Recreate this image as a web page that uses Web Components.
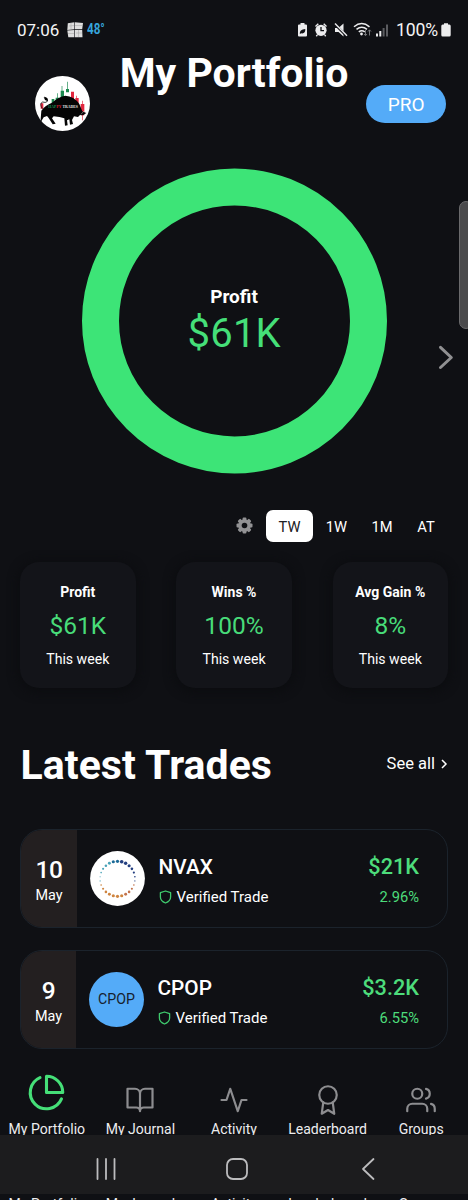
<!DOCTYPE html>
<html lang="en">
<head>
<meta charset="utf-8">
<title>My Portfolio</title>
<style>
html,body{margin:0;background:#0f1014}
body{width:468px;height:1200px;overflow:hidden;font-family:Roboto,sans-serif;color:#fff}
</style>
</head>
<body>
<portfolio-app></portfolio-app>
<script>
const define = (name, html) => customElements.define(name, class extends HTMLElement {
  constructor() {
    super();
    const root = this.attachShadow({ mode: 'open' });
    const t = document.createElement('template');
    t.innerHTML = typeof html === 'function' ? html(this) : html;
    root.append(t.content.cloneNode(true));
  }
});

define('status-bar', `
<style>
:host{display:flex;align-items:center;height:50px;padding:10px 17px 0;box-sizing:border-box;font-size:17px;line-height:20px;color:#f4f4f5}
.win{margin-left:8px;margin-right:4px}
.temp{font-weight:700;font-size:14.500px;color:#36a5dc;transform:scaleX(.8);transform-origin:0 50%;flex:1}
.pct{margin-left:7px;margin-right:3px;font-size:17.600px;letter-spacing:-.15px}
svg{display:block;flex:none}
</style>
<span>07:06</span>
<svg class="win" width="16" height="16" viewBox="0 0 16 16" fill="#dedede"><path d="M.8 1.200 7.400.3V7.300L.3 8zM8 .3 16 1 15.200 7.300H8zM.3 8.500 7.400 8v7.200L1.300 15.200zM8 8l7.200-.1.3 7.300-7.500.1z"/><path d="M2 4l5-.5M8 3.500h7M1 11.500h6M9 11h6M4 1v6M11.500 8v7" stroke="#a2a2a2" stroke-width=".5"/></svg>
<span class="temp">48°</span>
<svg width="92" height="16" viewBox="298 21.500 92 16" fill="#ececee">
  <path d="M301.500 24v-1.500h4V24h1.500q1 0 1 1v10q0 1-1 1h-7q-1 0-1-1V25q0-1 1-1z"/>
  <path d="M300.800 33.500q-.5-4.500 5.500-5 .2 5-4 4.300zM303 28.500l1.500-1.300" fill="#101115"/>
  <circle cx="322" cy="29.800" r="5.600"/><path d="M316.500 26l2.800-2.700M327.500 26l-2.800-2.700M318.300 34.500l-1 1.200M325.700 34.500l1 1.200" stroke="#ececee" stroke-width="1.400"/>
  <path d="M322 26.500v3.600h3" fill="none" stroke="#101115" stroke-width="1.300"/>
  <path d="M336 27.500h3.500l5-4.500v13l-5-4.500H336z"/><path d="M335 22.800l13 13" stroke="#101115" stroke-width="2.500"/><path d="M336 23l12 12.300" stroke="#ececee" stroke-width="1.400"/>
  <g fill="none" stroke="#ececee" stroke-width="1.500"><path d="M355 26.300q7.700-6.500 15.500 0M357.500 28.900q5.300-4.400 10.500 0M359.800 31.300q3-2.300 6 0"/></g>
  <circle cx="362.500" cy="33.500" r="1.400"/>
  <path d="M366.500 29.500v5.500m-1.500-1.500 1.500 1.700 1.500-1.700M370.500 35v-5.500m-1.500 1.500 1.500-1.700 1.500 1.700" fill="none" stroke="#77787b" stroke-width="1"/>
  <path d="M377 33h2v3h-2zM380.300 30.500h2V36h-2z"/><path d="M383.600 27.500h2V36h-2zM387 24h2v12h-2z" fill="#5b5c60"/>
</svg>
<span class="pct">100%</span>
<svg width="10" height="14" viewBox="0 0 10 14" fill="#ededee"><path d="M3 1.500V.3h4v1.200h1.300Q9.700 1.500 9.700 3v9q0 1.500-1.400 1.500H1.700Q.3 13.500.3 12V3q0-1.500 1.400-1.500z"/></svg>
`);

define('bull-avatar', `
<style>:host{display:block;width:55px;height:55px}svg{display:block}</style>
<svg width="55" height="55" viewBox="105 228 165 165">
  <circle cx="187.500" cy="310.500" r="82.500" fill="#fff"/>
  <g fill="#1c8a50"><path d="M185 258h2v14h5v28h-10v-28h3zM201 245h2v22h4v10h-9v-10h3zM171 280h2v13h4v12h-10v-12h4zM155 297h8v12h-8z"/></g>
  <g fill="#e2273f"><path d="M213 275h9v22h-9zM229 287h2v7h5v20h-10v-20h3zM246 302h2v10h5v34h-4v15h-2v-15h-5v-34h4zM122 310h8v16h-8z"/></g>
  <path d="M122 358 124 332Q136 315 156 308 176 290 196 287 222 288 238 312L247 334 259 339 249 346 240 345 234 351 222 349 216 360 219 372 210 374 208 358 201 361 203 376 195 377 193 355Q180 350 161 349L156 355 167 371 158 373 146 354 141 348 131 352 123 365z" fill="#050505"/>
  <path d="M127 326Q117 310 128 306 145 311 142 296L134 291" fill="none" stroke="#151515" stroke-width="2.500"/><path d="M131 291l10 3 3 10-9-4z"/>
  <path d="M243 343l9-10 5 6" fill="none" stroke="#f0c4c8" stroke-width="1.500"/>
  <text x="145" y="325" font-family="Liberation Serif,serif" font-weight="700" font-size="12.500" textLength="89" lengthAdjust="spacingAndGlyphs" fill="#e3e3e3"><tspan fill="#159052">HAP</tspan><tspan fill="#df2438">PY</tspan> TRADES</text>
</svg>`);

define('app-header', `
<style>
:host{display:grid;grid-template-columns:1fr auto 1fr;align-items:start;height:118px;padding:0 20px;box-sizing:border-box}
h1{margin:-1px 0 0;font-size:41px;line-height:48px;font-weight:700;white-space:nowrap}
bull-avatar{margin:26px 0 0 15px}
.pro{justify-self:end;margin:35px 2px 0 0;width:80px;height:38px;border-radius:19px;background:#54abf8;text-align:center;line-height:40px;font-size:19px;text-indent:.5px}
</style>
<bull-avatar></bull-avatar><h1>My Portfolio</h1><div class="pro">PRO</div>`);

define('profit-donut', `
<style>
:host{display:block;position:relative;height:342px}
.ring{display:grid;width:305px;height:305.500px;margin:0 auto;justify-items:center}
.ring>*{grid-area:1/1}
svg{display:block}
.label{padding-top:117px;text-align:center}
b{display:block;font-size:19px;line-height:24px}
span{display:block;font-size:40px;line-height:49px;letter-spacing:.2px;color:#45df78;text-indent:.5px}
.next{position:absolute;left:436px;top:175px}
.handle{position:absolute;left:459px;top:33px;width:14px;height:128px;box-sizing:border-box;border:1px solid #6a6a6c;border-radius:8px;background:#4a4a4c}
</style>
<div class="ring"><svg width="305" height="306"><circle cx="152.500" cy="152.900" r="134" fill="none" stroke="#3de477" stroke-width="37"/></svg>
<div class="label"><b>Profit</b><span>$61K</span></div></div>
<svg class="next" width="20" height="28" fill="none" stroke="#909092" stroke-width="3" stroke-linecap="round" stroke-linejoin="round"><path d="M4.500 4.300 15.300 14.500 4.500 24.500"/></svg>
<div class="handle"></div>`);

define('range-tabs', `
<style>
:host{display:flex;height:32px;padding-right:20px;justify-content:flex-end;align-items:center;font-size:14.700px}
svg{margin:-1px 13px 0 0}
span{width:44px;height:32px;text-align:center;line-height:34px}
.w{width:47px}
.on{background:#fff;color:#202124;border-radius:7px}
</style>
<svg width="17" height="17" viewBox="-8.500 -8.500 17 17"><g fill="#929294"><circle r="6.300"/><g><rect x="-1.900" y="-8" width="3.800" height="16" rx="1"/><rect x="-8" y="-1.900" width="16" height="3.800" rx="1"/></g><g transform="rotate(45)"><rect x="-1.900" y="-8" width="3.800" height="16" rx="1"/><rect x="-8" y="-1.900" width="16" height="3.800" rx="1"/></g></g><circle r="2.800" fill="#101115"/></svg>
<span class="w on">TW</span><span class="w">1W</span><span>1M</span><span>AT</span>`);

define('stat-card', `
<style>
:host{display:block;width:115.500px;height:126px;box-sizing:border-box;padding-top:20.500px;border-radius:19px;background:#131419;box-shadow:0 2px 10px 3px #0c0d10;text-align:center}
div{line-height:20px;font-size:14.100px}
.t{font-weight:700;font-size:14px}
.v{font-size:24.500px;line-height:30px;margin:9px 0 8px;color:#48dc79}
</style>
<div class="t"><slot name="title"></slot></div><div class="v"><slot></slot></div><div>This week</div>`);

define('stat-row', `
<style>:host{display:flex;justify-content:space-between;margin-top:19.500px;padding:0 20px}</style>
<stat-card><span slot="title">Profit</span>$61K</stat-card>
<stat-card><span slot="title">Wins %</span>100%</stat-card>
<stat-card><span slot="title">Avg Gain %</span>8%</stat-card>`);

define('section-head', `
<style>
:host{display:flex;align-items:center;justify-content:space-between;margin:54px 20px 39.500px;height:48px}
h2{margin:-2px 0 0 .5px;font-size:41px;line-height:48px;letter-spacing:.05px}
.all{display:flex;align-items:center;gap:6px;font-size:16.500px;line-height:20px;margin-top:-3px}
svg{margin-top:0}
</style>
<h2>Latest Trades</h2>
<div class="all">See all<svg width="7" height="12" fill="none" stroke="#fff" stroke-width="1.500"><path d="M1 2 5 6 1 10"/></svg></div>`);

define('trade-card', `
<style>
:host{display:flex;height:99px;box-sizing:border-box;border:1px solid #1b232c;border-radius:22px;overflow:hidden;margin:0 20px 22px}
.date{width:var(--date-w,56px);background:#231f20;text-align:center;padding-top:25.500px;box-sizing:border-box;font-size:14.400px;line-height:20px}
.day{font-size:24.500px;font-weight:500;line-height:28px;margin-bottom:2px;letter-spacing:-.5px}
.logo{width:55px;height:55px;margin:20.700px 13.500px 0 13px}
.mid{flex:1}
.sym,.amt{font-size:21.500px;font-weight:500;line-height:26px;padding-top:24px;margin-bottom:6.500px}
.amt{font-size:21.700px}
.sym{font-size:20.800px}
.ver{display:flex;align-items:center;font-size:15px;line-height:20px;gap:5px}
.right{text-align:right;padding-right:28px;color:#4ddc7b;font-size:14.700px;line-height:20px}
</style>
<div class="date"><div class="day"><slot name="day"></slot></div>May</div>
<div class="logo"><slot name="logo"></slot></div>
<div class="mid"><div class="sym"><slot name="sym"></slot></div><div class="ver"><svg width="13" height="14" viewBox="0 0 13 14" fill="none" stroke="#3fca6d" stroke-width="1.300" stroke-linejoin="round"><path d="M6.500 1 11.600 2.700V7Q11.600 11 6.500 13 1.400 11 1.400 7V2.700z"/></svg><span>Verified Trade</span></div></div>
<div class="right"><div class="amt"><slot name="amt"></slot></div><slot name="pct"></slot></div>`);

const dots = Array.from({ length: 26 }, (_, i) => {
  const a = i * 2 * Math.PI / 26, top = Math.cos(a), side = Math.sin(a);
  const r = .45 + 1.15 * Math.pow(Math.abs(top), 1.1) + (top > -.1 && side > 0 ? .25 : 0);
  const c = top > -.15 ? (side > .15 ? '#243f80' : side > -.3 ? '#1c6b98' : '#4aa3b8') : (side > .3 ? '#c2734d' : '#cf8540');
  return `<circle cx="${(27.5 + 17.5 * side).toFixed(2)}" cy="${(27.8 - 17.5 * top).toFixed(2)}" r="${r.toFixed(2)}" fill="${c}"/>`;
}).join('');
define('ticker-ring', `<style>:host,svg{display:block}</style><svg width="55" height="55"><circle cx="27.500" cy="27.500" r="27.400" fill="#fff"/>${dots}</svg>`);
define('ticker-badge', `<style>:host{display:block;width:55px;height:55px;border-radius:50%;background:#54abf8;color:#17212d;font-size:14.200px;line-height:55px;text-align:center}</style><slot></slot>`);

define('trade-list', `
<style>:host{display:block;height:219.500px}.b{--date-w:55px}</style>
<trade-card><span slot="day">10</span><ticker-ring slot="logo"></ticker-ring><span slot="sym">NVAX</span><span slot="amt">$21K</span><span slot="pct">2.96%</span></trade-card>
<trade-card class="b"><span slot="day">9</span><ticker-badge slot="logo">CPOP</ticker-badge><span slot="sym">CPOP</span><span slot="amt">$3.2K</span><span slot="pct">6.55%</span></trade-card>`);

define('nav-item', el => `
<style>
:host{display:block;flex:1 0 0;width:0;text-align:center;font-size:14.050px;line-height:20px;color:#ececee;white-space:nowrap}
.i{height:34px;display:flex;align-items:flex-end;justify-content:center}
.i.main{height:31.500px;padding-bottom:2.500px}
svg{flex:none;fill:none;stroke:#8d8d90;stroke-width:1.750;stroke-linecap:round;stroke-linejoin:round;margin-bottom:4.500px}
.main svg{stroke:#45df78;stroke-width:1.900;margin-bottom:5px}
</style>
${el.getAttribute('icon') ? `<div class="i ${el.getAttribute('icon') === 'pie' ? 'main' : ''}">${({
  pie: '<svg width="39" height="39" viewBox="0 0 24 24"><path d="M21.210 15.890A10 10 0 1 1 8 2.830M22 12A10 10 0 0 0 12 2v10z"/></svg>',
  book: '<svg width="30" height="30" viewBox="0 0 24 24"><path d="M2 3h6a4 4 0 0 1 4 4v14a3 3 0 0 0-3-3H2zM22 3h-6a4 4 0 0 0-4 4v14a3 3 0 0 1 3-3h7z"/></svg>',
  activity: '<svg width="30" height="30" viewBox="0 0 24 24"><path d="M22 12h-4l-3 9L9 3l-3 9H2"/></svg>',
  award: '<svg width="30" height="30" viewBox="0 0 24 24"><circle cx="12" cy="8" r="7"/><path d="M8.210 13.890 7 23l5-3 5 3-1.210-9.120"/></svg>',
  users: '<svg width="30" height="30" viewBox="0 0 24 24"><path d="M17 21v-2a4 4 0 0 0-4-4H5a4 4 0 0 0-4 4v2M23 21v-2a4 4 0 0 0-3-3.870M16 3.130a4 4 0 0 1 0 7.750"/><circle cx="9" cy="7" r="4"/></svg>'
})[el.getAttribute('icon')]}</div>` : ''}
<slot></slot>`);

define('tab-bar', `
<style>:host{display:flex;height:86.500px;padding-top:36.500px;box-sizing:border-box;overflow:hidden;overflow:clip}</style>
<slot></slot>`);

define('system-bar', `
<style>
:host{display:grid;grid-template-columns:repeat(3,131px);justify-content:center;align-items:center;justify-items:center;height:59px;background:#1c1c1e;padding:8px 0 0 6px;box-sizing:border-box}
svg{fill:none;stroke:#bcbcbe;stroke-width:1.800;stroke-linecap:round;stroke-linejoin:round}
</style>
<svg width="24" height="24"><path d="M3.500 2v20M12 2v20M20.500 2v20"/></svg>
<svg width="24" height="24"><rect x="2" y="2" width="20" height="20" rx="6"/></svg>
<svg width="24" height="24"><path d="M17.500 2 7 12l10.500 10"/></svg>`);

define('portfolio-app', `
<style>
:host{display:block;width:468px;height:1200px;overflow:hidden;background:#0f1014}
.peek{height:6px;padding:0}
</style>
<status-bar></status-bar>
<app-header></app-header>
<profit-donut></profit-donut>
<range-tabs></range-tabs>
<stat-row></stat-row>
<section-head></section-head>
<trade-list></trade-list>
<tab-bar><nav-item icon="pie">My Portfolio</nav-item><nav-item icon="book">My Journal</nav-item><nav-item icon="activity">Activity</nav-item><nav-item icon="award">Leaderboard</nav-item><nav-item icon="users">Groups</nav-item></tab-bar>
<system-bar></system-bar>
<tab-bar class="peek"><nav-item>My Portfolio</nav-item><nav-item>My Journal</nav-item><nav-item>Activity</nav-item><nav-item>Leaderboard</nav-item><nav-item>Groups</nav-item></tab-bar>`);
</script>
</body>
</html>
